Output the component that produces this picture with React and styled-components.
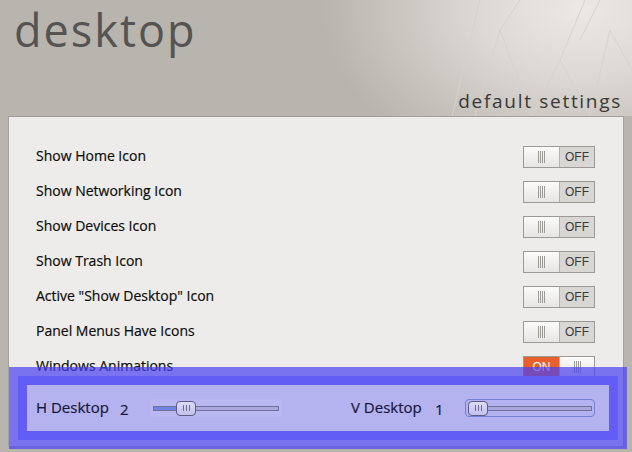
import React from 'react'
import styled, { createGlobalStyle } from 'styled-components'

const GlobalStyle = createGlobalStyle`
  html, body {
    margin: 0;
    padding: 0;
    background: #b8b4ae;
  }
  body {
    width: 632px;
    height: 452px;
    overflow: hidden;
    font-family: "Open Sans", "Noto Sans", sans-serif;
  }
`

const options = [
  { label: 'Show Home Icon', on: false },
  { label: 'Show Networking Icon', on: false },
  { label: 'Show Devices Icon', on: false },
  { label: 'Show Trash Icon', on: false },
  { label: 'Active "Show Desktop" Icon', on: false },
  { label: 'Panel Menus Have Icons', on: false },
  { label: 'Windows Animations', on: true },
]

function Grip () {
  return (
    <svg width="9" height="12" viewBox="0 0 9 12">
      <path d="M1.5 0v12M3.5 0v12M5.5 0v12M7.5 0v12" stroke="#9c9b98" strokeWidth="1" />
    </svg>
  )
}

function Toggle ({ on }) {
  return (
    <Switch>
      {on ? <OnPart>ON</OnPart> : <Handle><Grip /></Handle>}
      {on ? <Handle><Grip /></Handle> : <OffPart>OFF</OffPart>}
    </Switch>
  )
}

function Slider ({ width, value, fill, focused }) {
  return (
    <SliderBox $width={width} $focused={focused}>
      <Track>
        <Fill style={{ width: fill }} />
        <Thumb style={{ left: value }}>
          <svg width="7" height="6" viewBox="0 0 7 6">
            <path d="M0.5 0v6M3.5 0v6M6.5 0v6" stroke="#6d6b8e" strokeWidth="1" />
          </svg>
        </Thumb>
      </Track>
    </SliderBox>
  )
}

export default function App () {
  return (
    <Page>
      <GlobalStyle />
      <Header>
        <Lines width="632" height="116" viewBox="0 0 632 116">
          <g stroke="#d6d2cc" strokeWidth="1" fill="none">
            <path d="M452 116L480 0" />
            <path d="M475 116L500 30L520 0" />
            <path d="M500 30L532 116" />
            <path d="M532 116L560 60L585 0" />
            <path d="M560 60L590 116" />
            <path d="M600 0L580 40" />
            <path d="M590 116L610 30L632 70" />
          </g>
        </Lines>
        <Title>desktop</Title>
        <Subtitle>default settings</Subtitle>
      </Header>
      <Panel>
        <List>
          {options.map((o) => (
            <Row key={o.label}>
              <Label>{o.label}</Label>
              <Toggle on={o.on} />
            </Row>
          ))}
        </List>
        <Highlight>
          <HighlightPad>
            <SliderRow>
              <Group>
                <SliderLabel>H Desktop</SliderLabel>
                <Value>2</Value>
                <Slider width={132} value={22} fill={24} />
              </Group>
              <Group>
                <SliderLabel>V Desktop</SliderLabel>
                <Value>1</Value>
                <Slider width={130} value={-1} fill={0} focused />
              </Group>
            </SliderRow>
          </HighlightPad>
        </Highlight>
      </Panel>
    </Page>
  )
}

const Page = styled.div`
  width: 632px;
  height: 452px;
  display: flex;
  flex-direction: column;
  background: #b8b4ae;
`

const Header = styled.header`
  position: relative;
  height: 116px;
  box-sizing: border-box;
  padding: 0 10px 5px 14px;
  display: flex;
  flex-direction: column;
  background:
    radial-gradient(ellipse 260px 170px at 92% 8%, #ece9e5 0%, #dcd8d3 40%, rgba(185,180,174,0) 100%),
    #b8b4ae;
`

const Lines = styled.svg`
  position: absolute;
  left: 0;
  top: 0;
`

const Title = styled.h1`
  position: relative;
  margin: 0;
  font-family: "Open Sans", sans-serif;
  font-weight: 400;
  font-size: 45px;
  line-height: 60px;
  letter-spacing: 2px;
  color: #555452;
`

const Subtitle = styled.div`
  position: relative;
  margin-top: auto;
  align-self: flex-end;
  font-family: "Open Sans", sans-serif;
  font-size: 19px;
  line-height: 20px;
  letter-spacing: 1.7px;
  color: #3a3937;
`

const Panel = styled.section`
  margin: 0 8px;
  height: 330px;
  box-sizing: border-box;
  background: #edeceb;
  border: 1px solid #a4a19c;
  border-bottom: none;
  display: flex;
  flex-direction: column;
`

const List = styled.div`
  padding: 22px 28px 0 27px;
  display: flex;
  flex-direction: column;
`

const Row = styled.div`
  height: 35px;
  display: flex;
  align-items: center;
  justify-content: space-between;
`

const Label = styled.span`
  margin-top: -3px;
  font-family: "Open Sans", sans-serif;
  font-size: 14px;
  color: #0e0c0a;
  -webkit-text-stroke: 0.2px #0e0c0a;
`

const Switch = styled.div`
  width: 72px;
  height: 22px;
  box-sizing: border-box;
  border: 1px solid #9b9a96;
  display: flex;
`

const Handle = styled.div`
  width: 35px;
  display: flex;
  align-items: center;
  justify-content: center;
  background: linear-gradient(#fbfbfa, #e6e5e3);
  border-right: 1px solid #b3b1ad;
  &:last-child {
    border-right: none;
    border-left: 1px solid #b3b1ad;
  }
`

const OffPart = styled.div`
  flex: 1;
  display: flex;
  align-items: center;
  justify-content: center;
  background: #d9d7d3;
  font-family: "Liberation Sans", sans-serif;
  font-size: 12px;
  color: #3a3a3a;
`

const OnPart = styled(OffPart)`
  flex: none;
  width: 35px;
  background: #e8612c;
  color: #fff;
`

const Highlight = styled.div`
  position: relative;
  z-index: 1;
  margin: -17px -4px 0 0;
  padding: 9px;
  background: rgba(72, 64, 242, 0.7);
`

const HighlightPad = styled.div`
  padding: 9px;
  background: #625df5;
`

const SliderRow = styled.div`
  height: 46px;
  box-sizing: border-box;
  padding: 0 14px 0 9px;
  display: flex;
  align-items: center;
  justify-content: space-between;
  background: #b4b2ef;
`

const Group = styled.div`
  display: flex;
  align-items: center;
`

const SliderLabel = styled.span`
  width: 84px;
  margin-top: -2px;
  font-family: "Open Sans", sans-serif;
  font-size: 15px;
  color: #17163a;
  -webkit-text-stroke: 0.2px #17163a;
`

const Value = styled(SliderLabel)`
  width: 30px;
  margin-top: 2px;
`

const SliderBox = styled.div`
  width: ${(p) => p.$width}px;
  height: 18px;
  box-sizing: border-box;
  padding: 0 2px;
  display: flex;
  align-items: center;
  border-radius: 4px;
  border: 1px solid ${(p) => (p.$focused ? '#7382d6' : 'transparent')};
  background: ${(p) => (p.$focused ? 'transparent' : '#bab8f1')};
`

const Track = styled.div`
  position: relative;
  flex: 1;
  height: 5px;
  box-sizing: border-box;
  border: 1px solid #72709c;
  background: #a9a7dc;
`

const Fill = styled.div`
  height: 100%;
  background: #6f84e4;
`

const Thumb = styled.div`
  position: absolute;
  top: -6px;
  width: 20px;
  height: 15px;
  box-sizing: border-box;
  border: 1px solid #5e5c86;
  border-radius: 4px;
  background: linear-gradient(#dcdcf6, #c2c1ee);
  display: flex;
  align-items: center;
  justify-content: center;
`
